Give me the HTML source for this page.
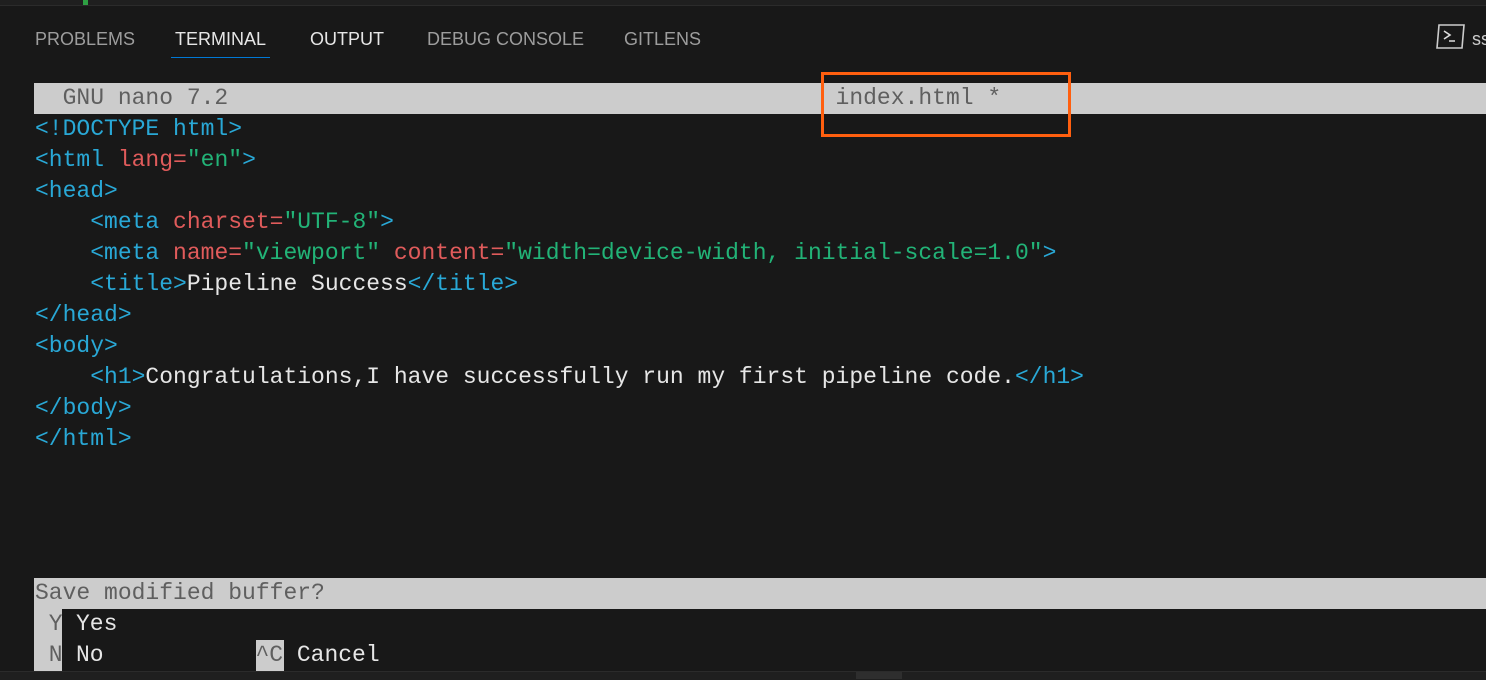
<!DOCTYPE html>
<html><head><style>
body{margin:0;width:1486px;height:679px;background:#181818;overflow:hidden;position:relative;font-family:"Liberation Sans",sans-serif}
.top{position:absolute;left:0;top:0;width:1486px;height:5px;background:#1f1f1f;border-bottom:1px solid #2b2b2b}
.green{position:absolute;left:83px;top:0;width:5px;height:5px;background:#2ea043}
.tab{position:absolute;top:29px;font-size:18px;color:#9d9d9d}
.ul{position:absolute;left:171px;top:57px;width:99px;height:1px;background:#0078d4}
.mono{font-family:"Liberation Mono",monospace;font-size:23px;white-space:pre;position:absolute;left:35px;line-height:31px}
.bar{position:absolute;left:34px;width:1452px;height:31px;background:#cccccc}
.t{color:#29a8d6}.a{color:#e05b5b}.s{color:#22b377}.w{color:#e6e6e6}.g{color:#5f5f5f}
</style></head><body>
<div class="top"></div><div class="green"></div>
<div class="tab" style="left:35px">PROBLEMS</div>
<div class="tab" style="left:175px;color:#e6e6e6">TERMINAL</div>
<div class="tab" style="left:310px;color:#e6e6e6">OUTPUT</div>
<div class="tab" style="left:427px">DEBUG CONSOLE</div>
<div class="tab" style="left:624px">GITLENS</div>
<div class="ul"></div>
<svg style="position:absolute;left:1436px;top:24px" width="30" height="26" viewBox="0 0 30 26"><path d="M3 1H28L26 24H1Z" fill="none" stroke="#ccc" stroke-width="1.6"/><path d="M8 7L14 11L8 15M13 17H19" fill="none" stroke="#ddd" stroke-width="1.6"/></svg>
<div class="tab" style="left:1472px;color:#ccc">ss</div>
<div class="bar" style="top:83px"></div>
<div class="mono g" style="top:83px">  GNU nano 7.2                                            index.html *</div>
<div class="mono" style="top:114px"><span class="t">&lt;!DOCTYPE html&gt;</span>
<span class="t">&lt;html </span><span class="a">lang=</span><span class="s">"en"</span><span class="t">&gt;</span>
<span class="t">&lt;head&gt;</span>
<span class="t">    &lt;meta </span><span class="a">charset=</span><span class="s">"UTF-8"</span><span class="t">&gt;</span>
<span class="t">    &lt;meta </span><span class="a">name=</span><span class="s">"viewport" </span><span class="a">content=</span><span class="s">"width=device-width, initial-scale=1.0"</span><span class="t">&gt;</span>
<span class="t">    &lt;title&gt;</span><span class="w">Pipeline Success</span><span class="t">&lt;/title&gt;</span>
<span class="t">&lt;/head&gt;</span>
<span class="t">&lt;body&gt;</span>
<span class="t">    &lt;h1&gt;</span><span class="w">Congratulations,I have successfully run my first pipeline code.</span><span class="t">&lt;/h1&gt;</span>
<span class="t">&lt;/body&gt;</span>
<span class="t">&lt;/html&gt;</span></div>
<div style="position:absolute;left:821px;top:72px;width:244px;height:59px;border:3px solid #ff5f0f"></div>
<div class="bar" style="top:578px"></div>
<div class="mono g" style="top:578px">Save modified buffer?</div>
<div class="bar" style="top:609px;width:28px;height:62px"></div>
<div style="position:absolute;left:62px;top:609px;width:1424px;height:62px;background:#181818"></div>
<div style="position:absolute;left:256px;top:640px;width:28px;height:31px;background:#cccccc"></div>
<div class="mono g" style="top:609px"> Y</div>
<div class="mono g" style="top:640px"> N</div>
<div class="mono w" style="top:609px;left:76px">Yes</div>
<div class="mono w" style="top:640px;left:76px">No           <span class="g">^C</span> Cancel</div>
<div style="position:absolute;left:0;top:671px;width:1486px;height:8px;background:#1f1f1f;border-top:1px solid #2b2b2b"></div>
<div style="position:absolute;left:856px;top:672px;width:46px;height:7px;background:#2e2e2e"></div>
</body></html>
